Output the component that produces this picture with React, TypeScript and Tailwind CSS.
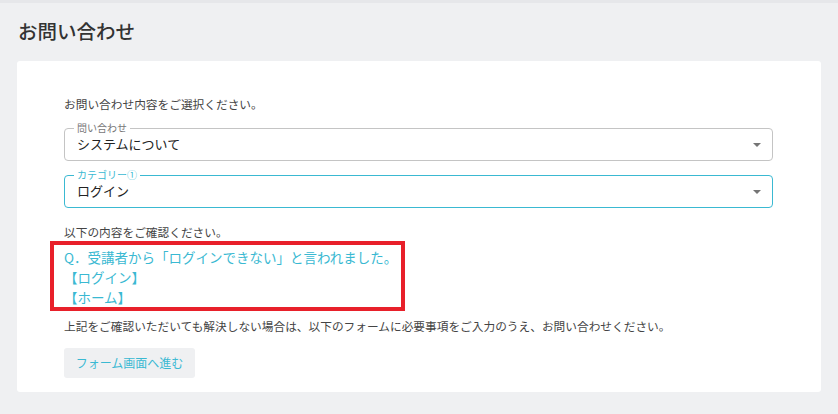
const font = { fontFamily: '"Noto Sans CJK JP", "Noto Sans", sans-serif' }

function Select({ label, value, active }: { label: string; value: string; active?: boolean }) {
  return (
    <div
      className={`relative h-[33px] rounded-[4px] border ${active ? 'border-[#3ab9d2]' : 'border-[#c4c4c4]'} flex items-center pl-[12px] pr-[11px]`}
    >
      <span
        className={`absolute -top-[7px] left-[9px] bg-white px-[3px] text-[10px] leading-[12px] ${active ? 'text-[#3ab9d2]' : 'text-[#777]'}`}
      >
        {label}
      </span>
      <span className="flex-1 text-[13px] leading-[16px] text-[#222] -mt-[2px]">{value}</span>
      <span className="w-0 h-0 border-l-[4px] border-r-[4px] border-t-[4px] border-l-transparent border-r-transparent border-t-[#757575]" />
    </div>
  )
}

export default function App() {
  return (
    <div className="w-[838px] h-[414px] bg-[#eff0f2] border-t-[3px] border-[#e6e7ea] overflow-hidden" style={font}>
      <h1 className="text-[19.5px] leading-[28px] font-medium text-[#333] pl-[18px] pt-[14px] h-[58px]">お問い合わせ</h1>
      <div className="ml-[17px] w-[804px] h-[331px] bg-white rounded-[3px] pl-[47px] pr-[47px] pt-[34px]">
        <p className="text-[11.7px] leading-[18px] text-[#444]">お問い合わせ内容をご選択ください。</p>
        <div className="mt-[15px] flex flex-col gap-[14px] w-[709px]">
          <Select label="問い合わせ" value="システムについて" />
          <Select label="カテゴリー①" value="ログイン" active />
        </div>
        <p className="mt-[15px] text-[11.7px] leading-[18px] text-[#444]">以下の内容をご確認ください。</p>
        <div className="-ml-[14px] mt-[0px] w-[355px] h-[70px] border-[4px] border-[#e8202a] pl-[10px] pt-[2px] text-[13.5px] leading-[20px] text-[#3ab9d2]">
          <p>Q．受講者から「ログインできない」と言われました。</p>
          <p>【ログイン】</p>
          <p>【ホーム】</p>
        </div>
        <p className="mt-[6px] text-[11.7px] leading-[18px] text-[#444]">
          上記をご確認いただいても解決しない場合は、以下のフォームに必要事項をご入力のうえ、お問い合わせください。
        </p>
        <button className="mt-[13px] w-[131px] h-[30px] rounded-[3px] bg-[#eff0f2] text-[12px] text-[#3ab9d2]">
          フォーム画面へ進む
        </button>
      </div>
    </div>
  )
}
